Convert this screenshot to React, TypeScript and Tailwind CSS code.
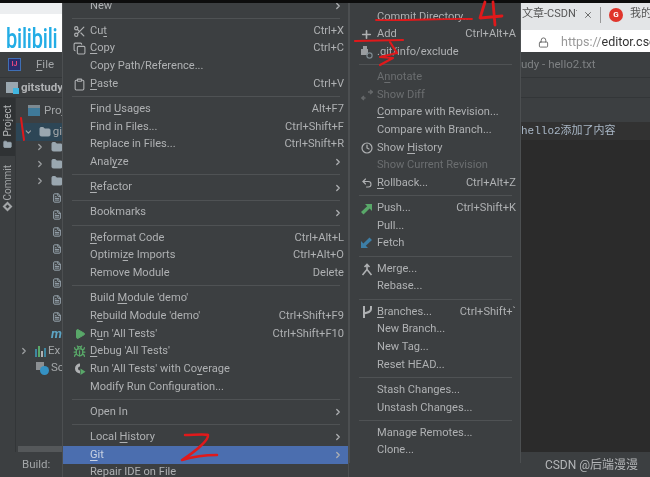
import { ReactNode } from "react";
import { ChevronRight, Scissors, Copy, Clipboard, Plus, Clock, Undo2, Play, Bug, Folder, FileText, ChevronDown, X, Lock } from "lucide-react";

type Row = { label?: string; key?: string; icon?: ReactNode; sub?: boolean; dim?: boolean; active?: boolean };

// "_" marks the mnemonic letter in a label
function Label({ text }: { text: string }) {
  const i = text.indexOf("_");
  if (i < 0) return <span>{text}</span>;
  return (
    <span>
      {text.slice(0, i)}
      <u className="underline-offset-2">{text[i + 1]}</u>
      {text.slice(i + 2)}
    </span>
  );
}

const SEP: Row = {};

const leftMenu: Row[] = [
  { label: "New", sub: true },
  SEP,
  { label: "Cu_t", key: "Ctrl+X", icon: <Scissors size={13} strokeWidth={2.2} className="text-[#afb1b3]" /> },
  { label: "_Copy", key: "Ctrl+C", icon: <Copy size={13} strokeWidth={2} className="text-[#afb1b3]" /> },
  { label: "Copy Path/Reference..." },
  { label: "_Paste", key: "Ctrl+V", icon: <Clipboard size={13} strokeWidth={2} className="text-[#afb1b3]" /> },
  SEP,
  { label: "Find _Usages", key: "Alt+F7" },
  { label: "Find in Files...", key: "Ctrl+Shift+F" },
  { label: "Replace in Files...", key: "Ctrl+Shift+R" },
  { label: "Anal_yze", sub: true },
  SEP,
  { label: "_Refactor", sub: true },
  SEP,
  { label: "Bookmarks", sub: true },
  SEP,
  { label: "_Reformat Code", key: "Ctrl+Alt+L" },
  { label: "Optimi_ze Imports", key: "Ctrl+Alt+O" },
  { label: "Remove Module", key: "Delete" },
  SEP,
  { label: "Build _Module 'demo'" },
  { label: "R_ebuild Module 'demo'", key: "Ctrl+Shift+F9" },
  { label: "R_un 'All Tests'", key: "Ctrl+Shift+F10", icon: <Play size={12} fill="#59a869" className="text-[#59a869]" /> },
  { label: "_Debug 'All Tests'", icon: <Bug size={13} strokeWidth={2.4} className="text-[#59a869]" /> },
  { label: "Run 'All Tests' with Co_verage", icon: <CoverageIcon /> },
  { label: "Modify Run Configuration..." },
  SEP,
  { label: "Open In", sub: true },
  SEP,
  { label: "Local _History", sub: true },
  { label: "_Git", sub: true, active: true },
  { label: "Repair IDE on File" },
];

const gitMenu: Row[] = [
  { label: "Commit Directory..." },
  { label: "Add", key: "Ctrl+Alt+A", icon: <Plus size={13} strokeWidth={3} className="text-[#afb1b3]" /> },
  { label: ".git/info/exclude", icon: <ExcludeIcon /> },
  SEP,
  { label: "A_nnotate", dim: true },
  { label: "Show Diff", dim: true, icon: <DiffIcon /> },
  { label: "_Compare with Revision..." },
  { label: "Compare with Branch..." },
  { label: "Show _History", icon: <Clock size={12} strokeWidth={2.4} className="text-[#afb1b3]" /> },
  { label: "Show Current Revision", dim: true },
  { label: "_Rollback...", key: "Ctrl+Alt+Z", icon: <Undo2 size={12} strokeWidth={2.2} className="text-[#afb1b3]" /> },
  SEP,
  { label: "Push...", key: "Ctrl+Shift+K", icon: <Arrow color="#59a869" /> },
  { label: "Pull..." },
  { label: "Fetch", icon: <Arrow color="#3d7ea6" flip /> },
  SEP,
  { label: "Merge...", icon: <MergeIcon /> },
  { label: "Rebase..." },
  SEP,
  { label: "_Branches...", key: "Ctrl+Shift+`", icon: <BranchIcon /> },
  { label: "New Branch..." },
  { label: "New Tag..." },
  { label: "Reset HEAD..." },
  SEP,
  { label: "Stash Changes..." },
  { label: "Unstash Changes..." },
  SEP,
  { label: "Manage Remotes..." },
  { label: "Clone..." },
];

function CoverageIcon() {
  return (
    <svg width="14" height="14" viewBox="0 0 14 14">
      <path d="M7 1.5a5 5 0 1 0 0 10V8.5a2 2 0 0 1 0-4z" fill="#afb1b3" />
      <path d="M7.5 6.5l5 3.2-5 3.2z" fill="#59a869" />
    </svg>
  );
}

function ExcludeIcon() {
  return (
    <svg width="13" height="14" viewBox="0 0 13 14">
      <path d="M1 4h2V1h4v3h1v6H1z" fill="#9a9da0" />
      <circle cx="9.5" cy="10.5" r="2.6" fill="none" stroke="#7f8b91" strokeWidth="1.2" />
    </svg>
  );
}

function DiffIcon() {
  return (
    <svg width="12" height="12" viewBox="0 0 12 12" fill="none" stroke="#65686a" strokeWidth="1.4">
      <path d="M0.5 9h4M7 3h4.5M9 1l2.500 2L9 5M3 7L.8 9 3 11" />
    </svg>
  );
}

function Arrow({ color, flip }: { color: string; flip?: boolean }) {
  return (
    <svg width="13" height="13" viewBox="0 0 13 13" className={flip ? "rotate-180" : ""}>
      <path d="M5 2h7v7l-2.400-2.400L3.500 12.500 1 10l6.200-5.700z" fill={color} />
    </svg>
  );
}

function MergeIcon() {
  return (
    <svg width="12" height="13" viewBox="0 0 12 13" fill="none" stroke="#afb1b3" strokeWidth="1.6">
      <path d="M6 2.500v4L1.500 12M6 6.500l4.500 5.500M3.500 4L6 1.500 8.500 4" />
    </svg>
  );
}

function BranchIcon() {
  return (
    <svg width="12" height="14" viewBox="0 0 12 14" fill="none" stroke="#afb1b3" strokeWidth="2">
      <path d="M3 1v12M10 1v3c0 3-3 3.500-7 4.500" />
    </svg>
  );
}

function Menu({ rows, className }: { rows: Row[]; className: string }) {
  return (
    <div className={`absolute flex flex-col overflow-hidden border-x border-[#4c4f51] bg-[#3c3f41] text-[11.1px] text-[#afb1b3] ${className}`}>
      {rows.map((r, i) =>
        r.label === undefined ? (
          <div key={i} className="flex h-[7.65px] shrink-0 items-center pl-[9px] pr-[8px]">
            <div className="h-px w-full bg-[#4f5254]" />
          </div>
        ) : (
          <div
            key={i}
            className={`flex h-[17.65px] shrink-0 items-center pr-[4px] ${r.active ? "bg-[#4b6eaf] text-[#c9d2e3]" : ""} ${r.dim ? "text-[#6b6e70]" : ""}`}
          >
            <div className="flex w-[27px] shrink-0 items-center justify-center pl-[6px]">{r.icon}</div>
            <Label text={r.label} />
            <div className="flex-1" />
            {r.key && <span className="whitespace-nowrap">{r.key}</span>}
            {r.sub && <ChevronRight size={10} strokeWidth={3} className="mr-[1px] text-[#afb1b3]" />}
          </div>
        ),
      )}
    </div>
  );
}

function TreeFolder() {
  return (
    <div className="flex h-[17px] shrink-0 items-center pl-[19px]">
      <ChevronRight size={10} strokeWidth={3} className="shrink-0 text-[#9da0a2]" />
      <Folder size={12} fill="#9aa7b0" className="ml-[6px] shrink-0 text-[#9aa7b0]" />
    </div>
  );
}

function TreeFile() {
  return (
    <div className="flex h-[17px] shrink-0 items-center pl-[36px]">
      <FileText size={12} strokeWidth={2.4} className="text-[#9aa7b0]" />
    </div>
  );
}

function ProjectPanel() {
  return (
    <div className="flex w-[46px] shrink-0 flex-col overflow-hidden text-[11.5px] text-[#a3a6a8]">
      <div className="flex h-[25px] shrink-0 items-center gap-[4px] pl-[12px]">
        <div className="h-[11px] w-[12px] shrink-0 border-t-[3px] border-[#7d8a92] bg-[#3f7a9a]" />
        <span>Proj</span>
      </div>
      <div className="flex h-[18px] shrink-0 items-center bg-[#2d4656] pl-[9px]">
        <ChevronDown size={10} strokeWidth={3} className="-ml-[1px] text-[#9da0a2]" />
        <Folder size={12} fill="#9aa7b0" className="ml-[6px] shrink-0 text-[#9aa7b0]" />
        <span className="ml-[2px]">gi</span>
      </div>
      <div className="-mt-[2.5px] flex flex-col">
        <TreeFolder />
        <TreeFolder />
        <TreeFolder />
        <TreeFile />
        <TreeFile />
        <TreeFile />
        <TreeFile />
        <TreeFile />
        <TreeFile />
        <TreeFile />
        <TreeFile />
        <div className="flex h-[17px] shrink-0 items-center pl-[35px] text-[13px] font-bold italic text-[#5da5c5]">m</div>
        <div className="flex h-[17px] shrink-0 items-center pl-[3px]">
          <ChevronRight size={10} strokeWidth={3} className="text-[#9da0a2]" />
          <span className="ml-[6px] flex h-[11px] items-end gap-px">
            <i className="h-[8px] w-[2px] bg-[#3e86a0]" />
            <i className="h-[11px] w-[2px] bg-[#59a869]" />
            <i className="h-[6px] w-[2px] bg-[#afb1b3]" />
            <i className="h-[9px] w-[2px] bg-[#3e86a0]" />
          </span>
          <span className="ml-[2px]">Ex</span>
        </div>
        <div className="flex h-[17px] shrink-0 items-center pl-[20px]">
          <span className="relative h-[13px] w-[13px] shrink-0">
            <i className="absolute left-0 top-0 h-[8px] w-[8px] bg-[#8b8f92]" />
            <i className="absolute bottom-0 right-0 h-[9px] w-[9px] rounded-full bg-[#3592c4]" />
          </span>
          <span className="ml-[2px]">Sc</span>
        </div>
      </div>
      <div className="flex-1" />
      <div className="ml-[2px] h-[6px] shrink-0 bg-[#55585a]" />
    </div>
  );
}

export default function App() {
  return (
    <div className="relative flex h-[477px] w-[650px] flex-col overflow-hidden bg-[#3c3f41] font-['Roboto','Noto_Sans_CJK_SC',sans-serif] blur-[0.3px]">
      <div className="relative z-20 h-[3px] shrink-0 bg-[#0d0d0d]" />

      {/* browser behind the IDE */}
      <div className="relative flex h-[49px] shrink-0 bg-white">
        <div className="flex w-[62px] shrink-0 flex-col">
          <div className="h-[11px] bg-[#eceef0]" />
          <div className="flex flex-1 items-end overflow-hidden pl-[6px]">
            <span className="origin-bottom translate-y-[3px] scale-y-[1.4] text-[20px] font-medium leading-[24px] tracking-[-0.2px] text-[#23ade5]">bilibili</span>
          </div>
        </div>
        <div className="flex-1" />
        <div className="flex w-[129px] shrink-0 flex-col text-[#555]">
          <div className="flex h-[27px] shrink-0 items-center bg-[#e3e5e7] pb-[4px] text-[11px]">
            <span className="w-[56px] shrink-0 overflow-hidden whitespace-nowrap pl-[1px]">文章-CSDN博</span>
            <X size={10} className="ml-[6px] shrink-0 text-[#555]" />
            <div className="ml-[7px] h-[16px] w-px shrink-0 bg-[#999]" />
            <div className="ml-[8px] flex h-[14px] w-[14px] shrink-0 items-center justify-center rounded-full bg-[#e0352b] text-[8px] font-bold text-white">G</div>
            <span className="ml-[7px] whitespace-nowrap">我的</span>
          </div>
          <div className="flex h-[22px] shrink-0 items-center bg-white pl-[17px] pt-[3px] text-[12.5px]">
            <Lock size={11} className="shrink-0 text-[#666]" />
            <span className="ml-[12px] whitespace-nowrap"><span className="text-[#999]">https://</span><span className="text-[#333]">editor.csc</span></span>
          </div>
        </div>
      </div>

      {/* IDE */}
      <div className="flex min-h-0 flex-1 flex-col text-[11.5px] text-[#a3a6a8]">
        <div className="flex h-[25px] shrink-0 items-center">
          <div className="ml-[8px] flex h-[13px] w-[13px] items-center justify-center border border-[#3f6fb5] bg-[#2b2d6c] text-[7px] font-bold text-[#e8487f]">IJ</div>
          <span className="ml-[15px] w-[485px]"><u className="underline-offset-2">F</u>ile</span>
          <span className="whitespace-nowrap text-[#7e8183]">udy - hello2.txt</span>
        </div>
        <div className="flex h-[20px] shrink-0 items-center border-t border-[#333638] pl-[6px] font-bold text-[#b0b2b4]">
          <div className="relative mr-[3px] h-[11px] w-[12px] shrink-0 bg-[#9aa7b0]">
            <i className="absolute -bottom-[1px] -right-[1px] h-[6px] w-[6px] bg-[#40b6e0]" />
          </div>
          gitstudy
        </div>
        <div className="flex min-h-0 flex-1 border-t border-[#333638]">
          <div className="flex w-[16px] shrink-0 flex-col border-r border-[#333638] text-[10px]">
            <div className="flex h-[58px] shrink-0 flex-col items-center gap-[3px] bg-[#2f3234] pt-[7px]">
              <span className="whitespace-nowrap [writing-mode:vertical-rl] rotate-180 text-[#b4b6b8]">Project</span>
              <Folder size={9} fill="#9aa7b0" className="text-[#9aa7b0]" />
            </div>
            <div className="mt-[9px] flex flex-col items-center gap-[3px]">
              <span className="whitespace-nowrap [writing-mode:vertical-rl] rotate-180">Commit</span>
              <i className="h-[7px] w-[7px] rotate-45 border-2 border-[#a3a6a8]" />
            </div>
          </div>
          <ProjectPanel />
          <div className="flex flex-1 flex-col pl-[459px]">
            <div className="h-[24px] shrink-0" />
            <div className="flex h-[18px] shrink-0 items-center overflow-hidden whitespace-nowrap bg-[#323232] pt-px font-['Liberation_Mono','Noto_Sans_CJK_SC',monospace] text-[11px] text-[#a9b7c6]">
              hello2添加了内容
            </div>
            <div className="flex-1 bg-[#2b2b2b]" />
          </div>
        </div>
        <div className="flex h-[25px] shrink-0 items-center pl-[22px]">
          <span>Build:</span>
          <div className="flex-1" />
          <span className="pr-[12px] text-[12px] text-[#b4b6b8]">CSDN @后端漫漫</span>
        </div>
      </div>

      <Menu rows={leftMenu} className="left-[62px] top-[-3px] h-[480px] w-[287px]" />
      <Menu rows={gitMenu} className="left-[349px] top-[3px] h-[460px] w-[172px] pt-[5px]" />

      {/* red hand-drawn marks on the screenshot */}
      <svg className="absolute left-0 top-0 z-30" width="650" height="477" fill="none" stroke="#e0191b" strokeLinecap="round" strokeLinejoin="round">
        <path d="M21 118l3 22" strokeWidth="2" />
        <path d="M185 435c8 0 20-1 23 0 1 5-12 16-26 25 10-3 25-5 35-5" strokeWidth="2.500" />
        <path d="M376 20c30 1 70-2 96-1" strokeWidth="1.800" />
        <path d="M355 41l48-1M390 42l7 11-17 4 13 1-13 7" strokeWidth="2.200" />
        <path d="M485 2l-5 16 22-2M493 2l2 23" strokeWidth="2.800" />
      </svg>
    </div>
  );
}
